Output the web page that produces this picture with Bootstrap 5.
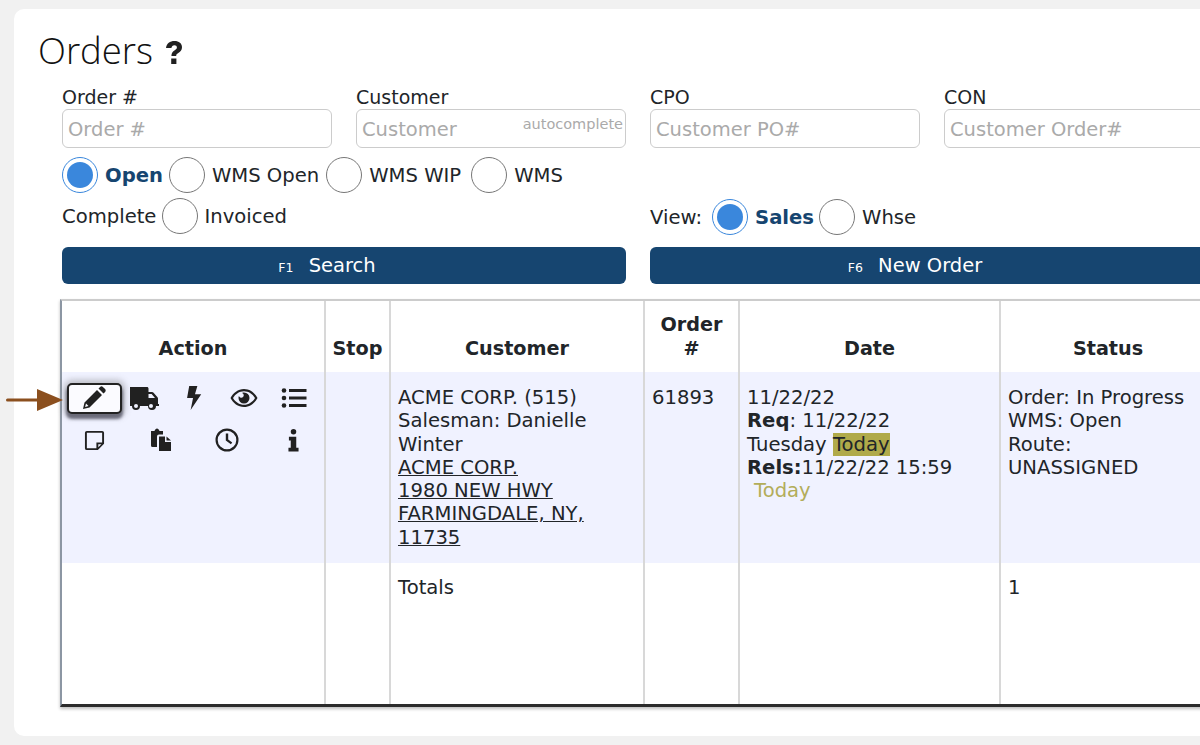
<!doctype html>
<html lang="en"><head><meta charset="utf-8"><title>Orders</title>
<link href="https://cdn.jsdelivr.net/npm/bootstrap@5.3.0/dist/css/bootstrap.min.css" rel="stylesheet">
<style>
html,body{height:745px;overflow:hidden;}
body{background:#f1f1f1;font-family:"DejaVu Sans",sans-serif;font-size:19.600px;color:#212529;}
.sheet{background:#fff;border-radius:10px;margin:9px -200px 0 14px;width:1386px;height:727px;padding:16px 24px;position:relative;}
.ttl{font-family:"Open Sans",sans-serif;font-weight:300;font-size:36.500px;line-height:50px;margin:0 0 11px;display:flex;align-items:center;gap:12px;color:#111;}
.ttl svg{margin-top:6px;}
.form-area{margin-left:24px;display:grid;grid-template-columns:270px 270px 270px 270px;column-gap:24px;}
.fld-lbl{display:block;line-height:22px;margin:0;height:23px;font-size:19px;}
.fld{height:39px;border:1px solid #ccc;border-radius:6px;font-size:19.500px;padding:2px 5px 0;box-shadow:none;color:#212529;}
.fld::placeholder{color:#aaa;opacity:1;}
.fld-wrap{position:relative;}
.auto{position:absolute;right:3px;top:6px;font-size:14.500px;color:#aaa;line-height:18px;}
.radios{grid-column:span 2;display:flex;flex-wrap:wrap;align-items:center;margin-top:7px;}
.radios2{grid-column:span 2;display:flex;align-items:center;}
.rline{display:flex;align-items:center;height:41px;}
.rline.tall{height:42px;}
.rd{width:36px;height:36px;border-radius:50%;border:1.500px solid #777;background:#fff;flex:none;margin:0 7px 2px 0;}
.rd.on{border:1.500px solid #3a87dc;padding:4px;background:#3a87dc content-box;}
.rl{margin-right:7px;line-height:1;color:#212529;}
.rl.on{font-weight:700;color:#164570;margin-right:6px;}
.rl.wide{margin-right:10px;}
.rl.tight{margin-right:6px;}
.rd.tight{margin-right:6px;}
.rl.on.tight{margin-right:5px;}
.cta{grid-column:span 2;height:37px;background:#164570;border:0;border-radius:6px;color:#fff;font-size:19.500px;line-height:37px;padding:0 34px 0 0;margin-top:9px;}
.cta:hover{background:#164570;color:#fff;}
.cta small{font-size:12.500px;margin-right:9px;}
.tbl{margin:15px 0 0 22px;border-collapse:separate;border-spacing:0;table-layout:fixed;width:1340px;border-left:2px solid #8c96a3;border-top:2px solid #ccc;border-bottom:3px solid #2c2c2c;box-shadow:0 2px 3px rgba(0,0,0,.25);}
.tbl th,.tbl td{border-right:2px solid #d8d8d8;vertical-align:top;padding:14px 7px 0 7px;line-height:23.300px;}
.tbl th{height:71px;vertical-align:bottom;text-align:center;padding:0 0 12px;font-weight:700;font-size:19.200px;}
.hl td{background:#f0f2ff;height:191px;}
.tot td{height:141px;padding-top:13px;}
.tbl td.act{padding:0;position:relative;}
.ic-row{display:grid;height:44px;align-items:center;justify-items:center;}
.ic-row.r1{grid-template-columns:repeat(5,50px);margin:4px 0 0 7px;}
.ic-row.r2{grid-template-columns:repeat(4,66.500px);margin:-2px 0 0 -1px;}
.ic-row svg{display:block;fill:#212121;}
.pen-box{width:55px;height:31px;border:2px solid #222;border-radius:5px;display:flex;align-items:center;justify-content:center;background:#fbfbff;box-shadow:0 0 6px 3px rgba(90,90,90,.35),0 4px 3px 1px rgba(60,60,80,.7);}
.arrow{position:absolute;left:-8px;top:380px;}
a.addr{color:#212529;text-decoration:underline;}
mark.today{background:#b0aa4a;color:#212529;padding:0;}
.today2{color:#b3ad5a;margin-left:7px;}
</style></head>
<body>
<div class="sheet">
<h1 class="ttl">Orders <svg width="18" height="26" viewBox="0 0 18 26" aria-hidden="true"><path d="M1 8C1.500 3.500 5 1 9.500 1 14 1 17 3.500 17 7.200c0 3-1.700 4.400-3.700 5.700-1.600 1-2.100 1.600-2.100 3.100H6.400c0-3 1-4.300 3-5.600 1.500-1 2.500-1.700 2.500-3 0-1.300-1-2.200-2.500-2.200-1.700 0-2.700 1-3 2.900zM6.200 18.600h5.200V24H6.200z" fill="#212121"/></svg></h1>
<div class="form-area">
  <div><label class="fld-lbl">Order #</label><input class="form-control fld" placeholder="Order #"></div>
  <div><label class="fld-lbl">Customer</label><div class="fld-wrap"><input class="form-control fld" placeholder="Customer"><span class="auto">autocomplete</span></div></div>
  <div><label class="fld-lbl">CPO</label><input class="form-control fld" placeholder="Customer PO#"></div>
  <div><label class="fld-lbl">CON</label><input class="form-control fld" placeholder="Customer Order#"></div>
  <div class="radios">
    <div class="rline"><span class="rd on"></span><span class="rl on">Open</span><span class="rd"></span><span class="rl">WMS Open</span><span class="rd"></span><span class="rl wide">WMS WIP</span><span class="rd"></span><span class="rl">WMS</span></div>
    <div class="rline tall"><span class="rl tight">Complete</span><span class="rd tight"></span><span class="rl">Invoiced</span></div>
  </div>
  <div class="radios2 align-self-end"><div class="rline"><span class="rl wide">View:</span><span class="rd on"></span><span class="rl on tight">Sales</span><span class="rd"></span><span class="rl">Whse</span></div></div>
  <button class="btn cta"><small>F1</small> Search</button>
  <button class="btn cta"><small>F6</small> New Order</button>
</div>
<table class="tbl">
<colgroup><col style="width:264px"><col style="width:65px"><col style="width:254px"><col style="width:95px"><col style="width:261px"><col style="width:216px"><col></colgroup>
<thead><tr><th>Action</th><th>Stop</th><th>Customer</th><th>Order<br>#</th><th>Date</th><th>Status</th><th></th></tr></thead>
<tbody>
<tr class="hl"><td class="act">
<div class="ic-row r1">
<div class="pen-box"><svg width="24" height="24" viewBox="0 0 24 24"><path d="M16.500 2.500l1.600-1.600c.8-.8 2-.8 2.800 0l2.200 2.200c.8.800.8 2 0 2.800l-1.600 1.600zM15 4l5 5L7.500 21.500 1 23l1.500-6.500zM4 17.500l-.9 3.400 3.400-.9z"/></svg></div>
<svg width="30" height="24" viewBox="0 0 30 24"><path d="M1 1h17c.8 0 1.500.7 1.500 1.500V6h3.500c.6 0 1.200.3 1.600.7l3.700 4.300c.4.400.7 1 .7 1.600V18h1v2h-3a4 4 0 0 1-8 0H11a4 4 0 0 1-8 0H1zM19.500 8v4H26l-3.400-4z"/><circle cx="7" cy="20" r="2" fill="#f0f2ff"/><circle cx="22" cy="20" r="2" fill="#f0f2ff"/></svg>
<svg width="16" height="24" viewBox="0 0 16 25"><path d="M3 0h8.500L9 8.500h6.500L4.500 25 7 12.500H.8z"/></svg>
<svg width="28" height="22" viewBox="0 0 28 22"><path fill-rule="evenodd" d="M14 2C8 2 3 6 .5 11 3 16 8 20 14 20s11-4 13.500-9C25 6 20 2 14 2zm0 2.200c4.700 0 8.800 2.900 11 6.800-2.200 3.900-6.300 6.800-11 6.800S5.200 14.900 3 11c2.200-3.900 6.300-6.800 11-6.800z"/><path d="M14 5.500a5.500 5.500 0 1 1-5.500 5.500c0-.7.100-1.300.4-1.900a2.500 2.500 0 1 0 3.200-3.200c.6-.3 1.200-.4 1.900-.4z"/></svg>
<svg width="26" height="22" viewBox="0 0 26 22"><circle cx="3" cy="3.500" r="2.300"/><circle cx="3" cy="11" r="2.300"/><circle cx="3" cy="18.500" r="2.300"/><path d="M8 2h17.500v3H8zM8 9.500h17.500v3H8zM8 17h17.500v3H8z"/></svg>
</div>
<div class="ic-row r2">
<svg width="21" height="21" viewBox="0 0 22 22"><path fill-rule="evenodd" d="M3 1h16a2 2 0 0 1 2 2v11.500L14.500 21H3a2 2 0 0 1-2-2V3a2 2 0 0 1 2-2zm0 2v16h10v-6h6V3zM15 15v3.200L18.200 15z"/></svg>
<svg width="22" height="24" viewBox="0 0 22 24"><path d="M1 3h3.500C5 1.500 6 .5 7 .5S9 1.500 9.500 3H13v3.500H9a2 2 0 0 0-2 2V19H2.500A1.500 1.500 0 0 1 1 17.500z"/><path d="M9 8.500h6V14h6v9H9zM16.500 8.500l4.500 4h-4.500z"/></svg>
<svg width="24" height="24" viewBox="0 0 24 24"><path fill-rule="evenodd" d="M12 .5a11.500 11.500 0 1 1 0 23 11.500 11.500 0 0 1 0-23zm0 2.200a9.300 9.300 0 1 0 0 18.600 9.300 9.300 0 0 0 0-18.600z"/><path d="M10.800 5.500h2.400v6l4 3-1.300 1.800-5.100-3.700z"/></svg>
<svg width="11" height="24" viewBox="0 0 12 25"><circle cx="6" cy="3.500" r="3"/><path d="M1 9h8v12h2.500v4H.5v-4H3v-8H1z"/></svg>
</div>
</td><td></td><td>ACME CORP. (515)<br>Salesman: Danielle Winter<br><a class="addr" href="#">ACME CORP.<br>1980 NEW HWY<br>FARMINGDALE, NY,<br>11735</a></td><td>61893</td>
<td>11/22/22<br><b>Req</b>: 11/22/22<br>Tuesday <mark class="today">Today</mark><br><b>Rels:</b>11/22/22 15:59<br><span class="today2">Today</span></td>
<td>Order: In Progress<br>WMS: Open<br>Route:<br>UNASSIGNED</td><td></td></tr>
<tr class="tot"><td></td><td></td><td>Totals</td><td></td><td></td><td>1</td><td></td></tr>
</tbody></table>
<svg class="arrow" width="58" height="22" viewBox="0 0 58 22" aria-hidden="true"><path d="M31 0l26 11-26 11v-9.500H1.500a1.500 1.500 0 0 1 0-3H31z" fill="#8b4f1e"/></svg>
</div>
</body></html>
